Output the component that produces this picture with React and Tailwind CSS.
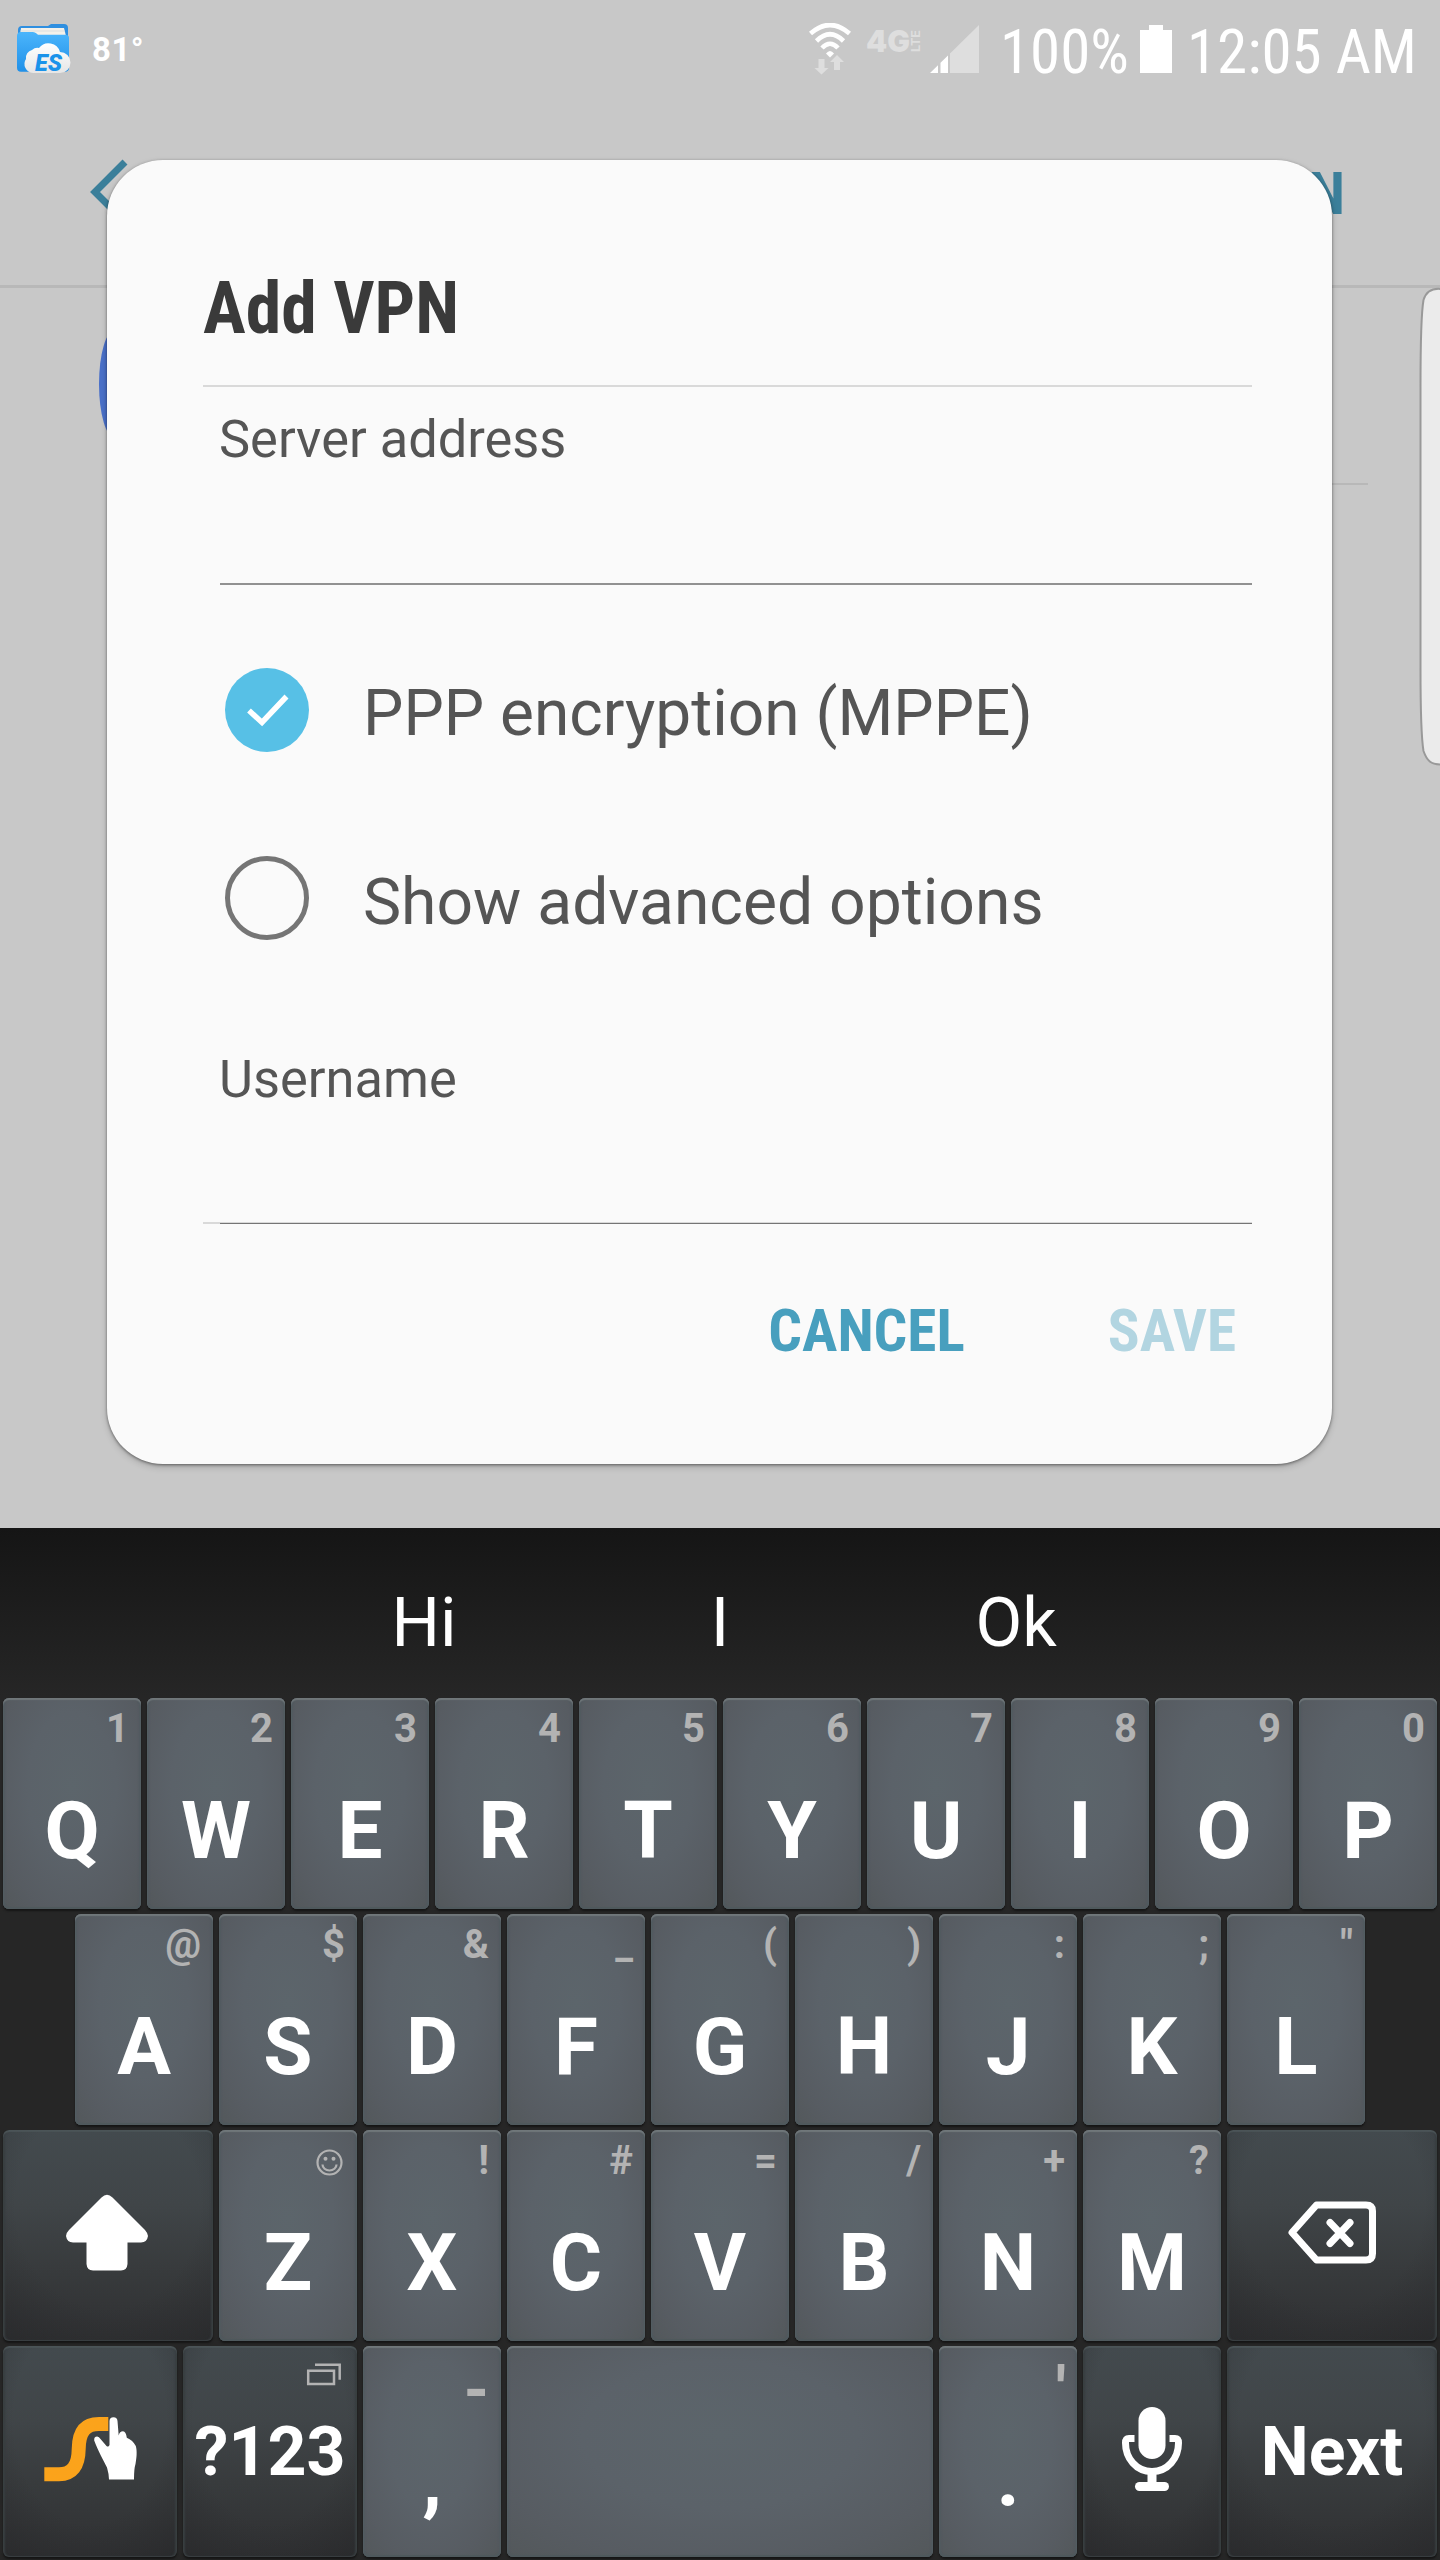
const LIGHT_KEY =
  "bg-[radial-gradient(ellipse_72%_78%_at_50%_42%,#5c656b_0%,#5b6269_45%,#575c62_78%,#53585b_100%)] shadow-[inset_0_2px_1px_#70777a,inset_0_-2px_1px_#4f595d,inset_2px_0_2px_#505a60,inset_-2px_0_2px_#505a60,0_2px_2px_#151515]";
const DARK_KEY =
  "bg-[radial-gradient(ellipse_80%_90%_at_50%_35%,transparent_55%,rgba(34,34,36,0.45)_100%),linear-gradient(180deg,#434a4e_0%,#404548_35%,#383b3d_65%,#2f3032_100%)] shadow-[inset_0_2px_1px_#4b5457,inset_0_-1px_1px_#3a3f42,inset_2px_0_2px_#383e41,inset_-2px_0_2px_#383e41,0_2px_2px_#151515]";

function Key({ width = "w-[144px]", dark = false, children }) {
  return (
    <div className={`${width} h-[216px] shrink-0 px-[3px] pt-[2px] pb-[3px]`}>
      <button
        className={`flex h-full w-full flex-col items-center overflow-hidden rounded-[6px] font-bold text-white ${dark ? DARK_KEY : LIGHT_KEY}`}
      >
        {children}
      </button>
    </div>
  );
}

function LetterKey({ letter, hint }) {
  return (
    <Key>
      <span className="mt-[7px] flex h-[48px] w-full items-center justify-end pr-[12px] text-[40px] leading-[48px] text-[#b3b3b3]">
        {hint}
      </span>
      <span className="mt-[30px] text-[80px] leading-[96px]">{letter}</span>
    </Key>
  );
}

function Smiley() {
  return (
    <svg className="mt-[2px] mr-[2px] h-[27px] w-[27px]" viewBox="0 0 27 27" fill="none" stroke="#b3b3b3" strokeWidth="2.2">
      <circle cx="13.5" cy="13.5" r="12" />
      <circle cx="9.5" cy="9.7" r="2" fill="#b3b3b3" stroke="none" />
      <circle cx="17.5" cy="9.7" r="2" fill="#b3b3b3" stroke="none" />
      <path d="M6.5 15.5a7 6 0 0 0 14 0" />
    </svg>
  );
}

function StatusBar() {
  return (
    <div className="flex h-[96px] items-start text-white">
      <svg className="mt-[23px] ml-[16px] h-[52px] w-[57px]" viewBox="16 23 57 52">
        <defs>
          <linearGradient id="folder" x1="0" y1="0" x2="0" y2="1">
            <stop offset="0" stopColor="#4bb5fc" />
            <stop offset="1" stopColor="#2090e8" />
          </linearGradient>
          <linearGradient id="cloud" x1="0" y1="0" x2="0" y2="1">
            <stop offset="0" stopColor="#ffffff" />
            <stop offset="1" stopColor="#e6e6e6" />
          </linearGradient>
        </defs>
        <path d="M18 38v-8q0-4 4-4h26l3-2h13q4 0 4 4v20h-50z" fill="#2f8fe0" />
        <path d="M21 28h43l2 8h-46z" fill="#f4f1ea" />
        <path d="M20 31h45" stroke="#cfd6da" strokeWidth=".7" />
        <path d="M17 36q0-4 4-4h12q2 0 3.500 1.500l1.500 1.200h27q4 0 4 3v30q0 4-4 4h-44q-4 0-4-4z" fill="url(#folder)" />
        <path d="M33 73a9 9 0 0 1-7-14 8 8 0 0 1 6-9 8 8 0 0 1 7-2 12 12 0 0 1 21 4 10.500 10.500 0 0 1 0 21z" fill="url(#cloud)" />
        <text x="35" y="70.500" fontFamily="Roboto" fontWeight="900" fontStyle="italic" fontSize="23" textLength="27" lengthAdjust="spacingAndGlyphs" fill="#1b93ea">ES</text>
      </svg>
      <span className="mt-[30px] ml-[19px] text-[33px] leading-[40px] font-bold tracking-[0.5px]">81°</span>

      <svg className="mt-[23px] ml-auto h-[52px] w-[44px]" viewBox="0 0 44 52">
        <g fill="none" stroke="#fff" strokeWidth="4.600">
          <path d="M2.500 10.500Q22-6.500 41.500 10.500" />
          <path d="M8.500 18Q22 4.500 35.500 18" />
          <path d="M14 25Q22 16.500 30 25" />
        </g>
        <path d="M18 30.500q4-5 8 0l-4 4z" fill="#fff" />
        <path d="M10.500 36h6v9h4l-7 6.500-7-6.500h4zM26 47v-8h-4l7-7 7 7h-4v8z" fill="#dedede" />
      </svg>
      <svg className="mt-[20px] ml-[14px] h-[40px] w-[56px] overflow-visible" viewBox="0 -8 56 40" fill="#dedede" fontFamily="Inter" fontWeight="900">
        <text x="0" y="24" fontSize="30" textLength="44" lengthAdjust="spacingAndGlyphs">4G</text>
        <text transform="translate(54 24) rotate(-90)" fontSize="12" textLength="22" lengthAdjust="spacingAndGlyphs" fontWeight="700">LTE</text>
      </svg>
      <svg className="mt-[25px] ml-[8px] h-[48px] w-[50px]" viewBox="0 0 50 48">
        <path d="M49 0V48H20V28.400z" fill="#dedede" />
        <path d="M0 48L8 40.200V48zM10.500 48V37.700L18 30.400V48z" fill="#fff" />
      </svg>
      <span className="mt-[16px] ml-[20px] w-[129px] text-[61px] leading-[72px] whitespace-nowrap font-[Roboto_Condensed,Roboto]">100%</span>
      <svg className="mt-[25px] ml-[11px] h-[48px] w-[32px]" viewBox="0 0 32 48" fill="#fff">
        <path d="M9 0h14v5h9v43h-32v-43h9z" />
      </svg>
      <span className="mt-[16px] mr-[11px] ml-[15px] w-[242px] text-[61px] leading-[72px] whitespace-nowrap font-[Roboto_Condensed,Roboto]">12:05 AM</span>
    </div>
  );
}

function Settings() {
  return (
    <div>
      <div className="flex h-[192px] justify-between border-b-[3px] border-[#b8b8b8]">
        <svg className="mt-[62px] ml-[89px] h-[70px] w-[40px]" viewBox="0 0 40 70" fill="none" stroke="#3b7f9a" strokeWidth="7">
          <path d="M36 4L6 34l30 30" />
        </svg>
        <span className="mt-[62px] mr-[95px] text-[60px] leading-[72px] font-bold text-[#3b7f9a] font-[Roboto_Condensed,Roboto]">N</span>
      </div>
      <div className="flex h-[195px] items-center">
        <div className="mb-[4px] ml-[99px] h-[108px] w-[100px] rounded-[16px/54px] bg-[#4a70c8]" />
      </div>
      <div className="mr-[72px] ml-[240px] h-[2px] bg-[#b8b8b8]" />
    </div>
  );
}

function Dialog() {
  return (
    <div className="absolute top-[160px] left-[107px] h-[1304px] w-[1225px] rounded-[56px] bg-[#fafafa] pr-[80px] pl-[96px] text-[#555] shadow-[0_1px_3px_rgba(0,0,0,0.45),0_3px_7px_rgba(0,0,0,0.18)]">
      <h1 className="pt-[107px] text-[71.6px] leading-[84px] font-bold text-[#3a3a3a] font-[Roboto_Condensed,Roboto]">Add VPN</h1>
      <div className="mt-[34px] h-[2px] bg-[#d9d9d9]" />
      <div className="mt-[22px] pl-[16px] text-[52.4px] leading-[60px]">Server address</div>
      <div className="mt-[114px] ml-[17px] h-[2px] bg-[#919191]" />

      <div className="mt-[83px] flex gap-[54px] pl-[22px]">
        <svg className="h-[84px] w-[84px]" viewBox="0 0 84 84" fill="none">
          <circle cx="42" cy="42" r="42" fill="#57c0e6" />
          <path d="M24 42.500L37 54.500 61.500 28.500" stroke="#fff" strokeWidth="5.500" />
        </svg>
        <span className="mt-[4px] h-[80px] text-[64px] leading-[84px]">PPP encryption (MPPE)</span>
      </div>
      <div className="mt-[104px] flex gap-[54px] pl-[22px]">
        <div className="h-[84px] w-[84px] rounded-full border-[5px] border-[#757575]" />
        <span className="mt-[4px] h-[80px] text-[64.2px] leading-[84px]">Show advanced options</span>
      </div>

      <div className="mt-[109px] pl-[16px] text-[52.4px] leading-[60px]">Username</div>
      <div className="mt-[113px] h-[2px] bg-[#d9d9d9] pt-[1px] pl-[17px]">
        <div className="h-px bg-[#757575]" />
      </div>

      <div className="mt-[71px] flex justify-end gap-[143px] pr-[16px] text-[59.2px] leading-[72px] font-bold font-[Roboto_Condensed,Roboto]">
        <button className="text-[#489fbe]">CANCEL</button>
        <button className="text-[#b2d5e1]">SAVE</button>
      </div>
    </div>
  );
}

const ROW1 = [["Q", "1"], ["W", "2"], ["E", "3"], ["R", "4"], ["T", "5"], ["Y", "6"], ["U", "7"], ["I", "8"], ["O", "9"], ["P", "0"]];
const ROW2 = [["A", "@"], ["S", "$"], ["D", "&"], ["F", "_"], ["G", "("], ["H", ")"], ["J", ":"], ["K", ";"], ["L", '"']];
const ROW3 = [["Z", <Smiley key="s" />], ["X", "!"], ["C", "#"], ["V", "="], ["B", "/"], ["N", "+"], ["M", "?"]];

const renderKeys = (row) => row.map(([letter, hint]) => <LetterKey key={letter} letter={letter} hint={hint} />);

function Keyboard() {
  return (
    <div className="h-[1032px] bg-[#262626]">
      <div className="flex h-[168px] justify-center bg-linear-to-b from-[#151515] to-[#262626] pt-[55px] text-[68px] leading-[80px] text-white">
        <span className="w-[296px] text-center">Hi</span>
        <span className="w-[296px] text-center">I</span>
        <span className="w-[296px] text-center">Ok</span>
      </div>
      <div className="flex">{renderKeys(ROW1)}</div>
      <div className="flex pl-[72px]">{renderKeys(ROW2)}</div>
      <div className="flex">
        <Key width="w-[216px]" dark>
          <svg className="mt-[64px] mr-[2px] h-[77px] w-[82px]" viewBox="0 0 82 77" fill="#fff">
            <path d="M35.500 3.500Q41-2 46.500 3.500L79 36Q82 39.500 82 42 81 48.500 75 48.500H61.500V70Q61 76.500 55 76.500H27Q21 76.500 20.500 70V48.500H7Q1 48.500 0 42 0 39 3 36z" />
          </svg>
        </Key>
        {renderKeys(ROW3)}
        <Key width="w-[216px]" dark>
          <svg className="mt-[70px] h-[64px] w-[90px]" viewBox="0 0 90 64" fill="none" stroke="#fff" strokeWidth="7" strokeLinejoin="round">
            <path d="M5 32.500L29.500 5H79Q85.500 5 85.500 11V53.500Q85.500 60 79 60H29.500z" />
            <path d="M43 22.500L63 43.500M63 22.500L43 43.500" strokeLinecap="round" />
          </svg>
        </Key>
      </div>
      <div className="flex">
        <Key width="w-[180px]" dark>
          <svg className="mt-[69px] ml-px h-[68px] w-[94px]" viewBox="43 15 94 68">
            <path d="M43.300 74.300H58C71 74.300 77.500 66 77.700 49S84 24 98 24H107.300" fill="none" stroke="#fba31b" strokeWidth="14" />
            <path d="M108.500 21q0-3.800 4-3.800 3.800 0 4 3.800l1.200 14.500q1-4.200 4.300-4.200 3 .4 3.800 6.500 6 2.500 9 8.200c1.500 5 .8 12-.3 18q-1.500 4.500-1.500 15.500H108q-.2-6-2-12c-3-6-9.500-18-12.800-27q-.4-4 3-4 1.800 0 3.300 2.500l6 7q2 1.500 3-1z" fill="#fff" />
          </svg>
        </Key>
        <Key width="w-[180px]" dark>
          <svg className="mt-[16px] mr-[15px] h-[24px] w-[36px] self-end" viewBox="306 2362 36 24" fill="none" stroke="#b3b3b3" strokeWidth="2.500">
            <path d="M308.200 2370.700h25.800v13.200h-25.800zM315 2364.800h24.700v15" />
          </svg>
          <span className="mt-[26px] text-[68px] leading-[80px]">?123</span>
        </Key>
        <Key>
          <span className="mt-[12px] flex h-[64px] w-full justify-end pr-[12px] text-[64px] leading-[66px] text-[#b3b3b3]">-</span>
          <span className="mt-[9px] text-[80px] leading-[96px]">,</span>
        </Key>
        <Key width="w-[432px]" />
        <Key>
          <span className="mt-[12px] flex h-[64px] w-full justify-end pr-[11px] text-[64px] leading-[66px] text-[#b3b3b3]">'</span>
          <span className="mt-[9px] text-[80px] leading-[96px]">.</span>
        </Key>
        <Key dark>
          <svg className="mt-[60px] h-[86px] w-[62px]" viewBox="0 0 62 86">
            <rect x="17.500" y="1" width="27" height="52" rx="13.500" fill="#fff" />
            <path d="M13.500 32.500H8Q4.500 32.500 4.500 37C4.500 52 15 65.500 31 65.500S57.500 52 57.500 37Q57.500 32.500 54 32.500H48.500" fill="none" stroke="#fff" strokeWidth="7" />
            <rect x="26.500" y="64" width="9" height="14" fill="#fff" />
            <rect x="14" y="76" width="34" height="9" rx="4.500" fill="#fff" />
          </svg>
        </Key>
        <Key width="w-[216px]" dark>
          <span className="mt-[66px] text-[68px] leading-[80px]">Next</span>
        </Key>
      </div>
    </div>
  );
}

export default function App() {
  return (
    <div className="relative h-[2560px] w-[1440px] overflow-hidden bg-[#c8c8c8] font-[Roboto,sans-serif]">
      <div className="h-[1528px]">
        <StatusBar />
        <Settings />
      </div>
      <svg className="absolute top-[287px] left-[1419px] h-[480px] w-[21px]" viewBox="0 0 21 480">
        <path d="M22 2C12 1 7 5 4.500 13Q1.500 30 1.500 100V381Q1.500 446 4.500 464C8 474 12 477.500 22 477.500" fill="#ebebeb" stroke="#999" strokeWidth="2" />
      </svg>
      <Dialog />
      <Keyboard />
    </div>
  );
}
